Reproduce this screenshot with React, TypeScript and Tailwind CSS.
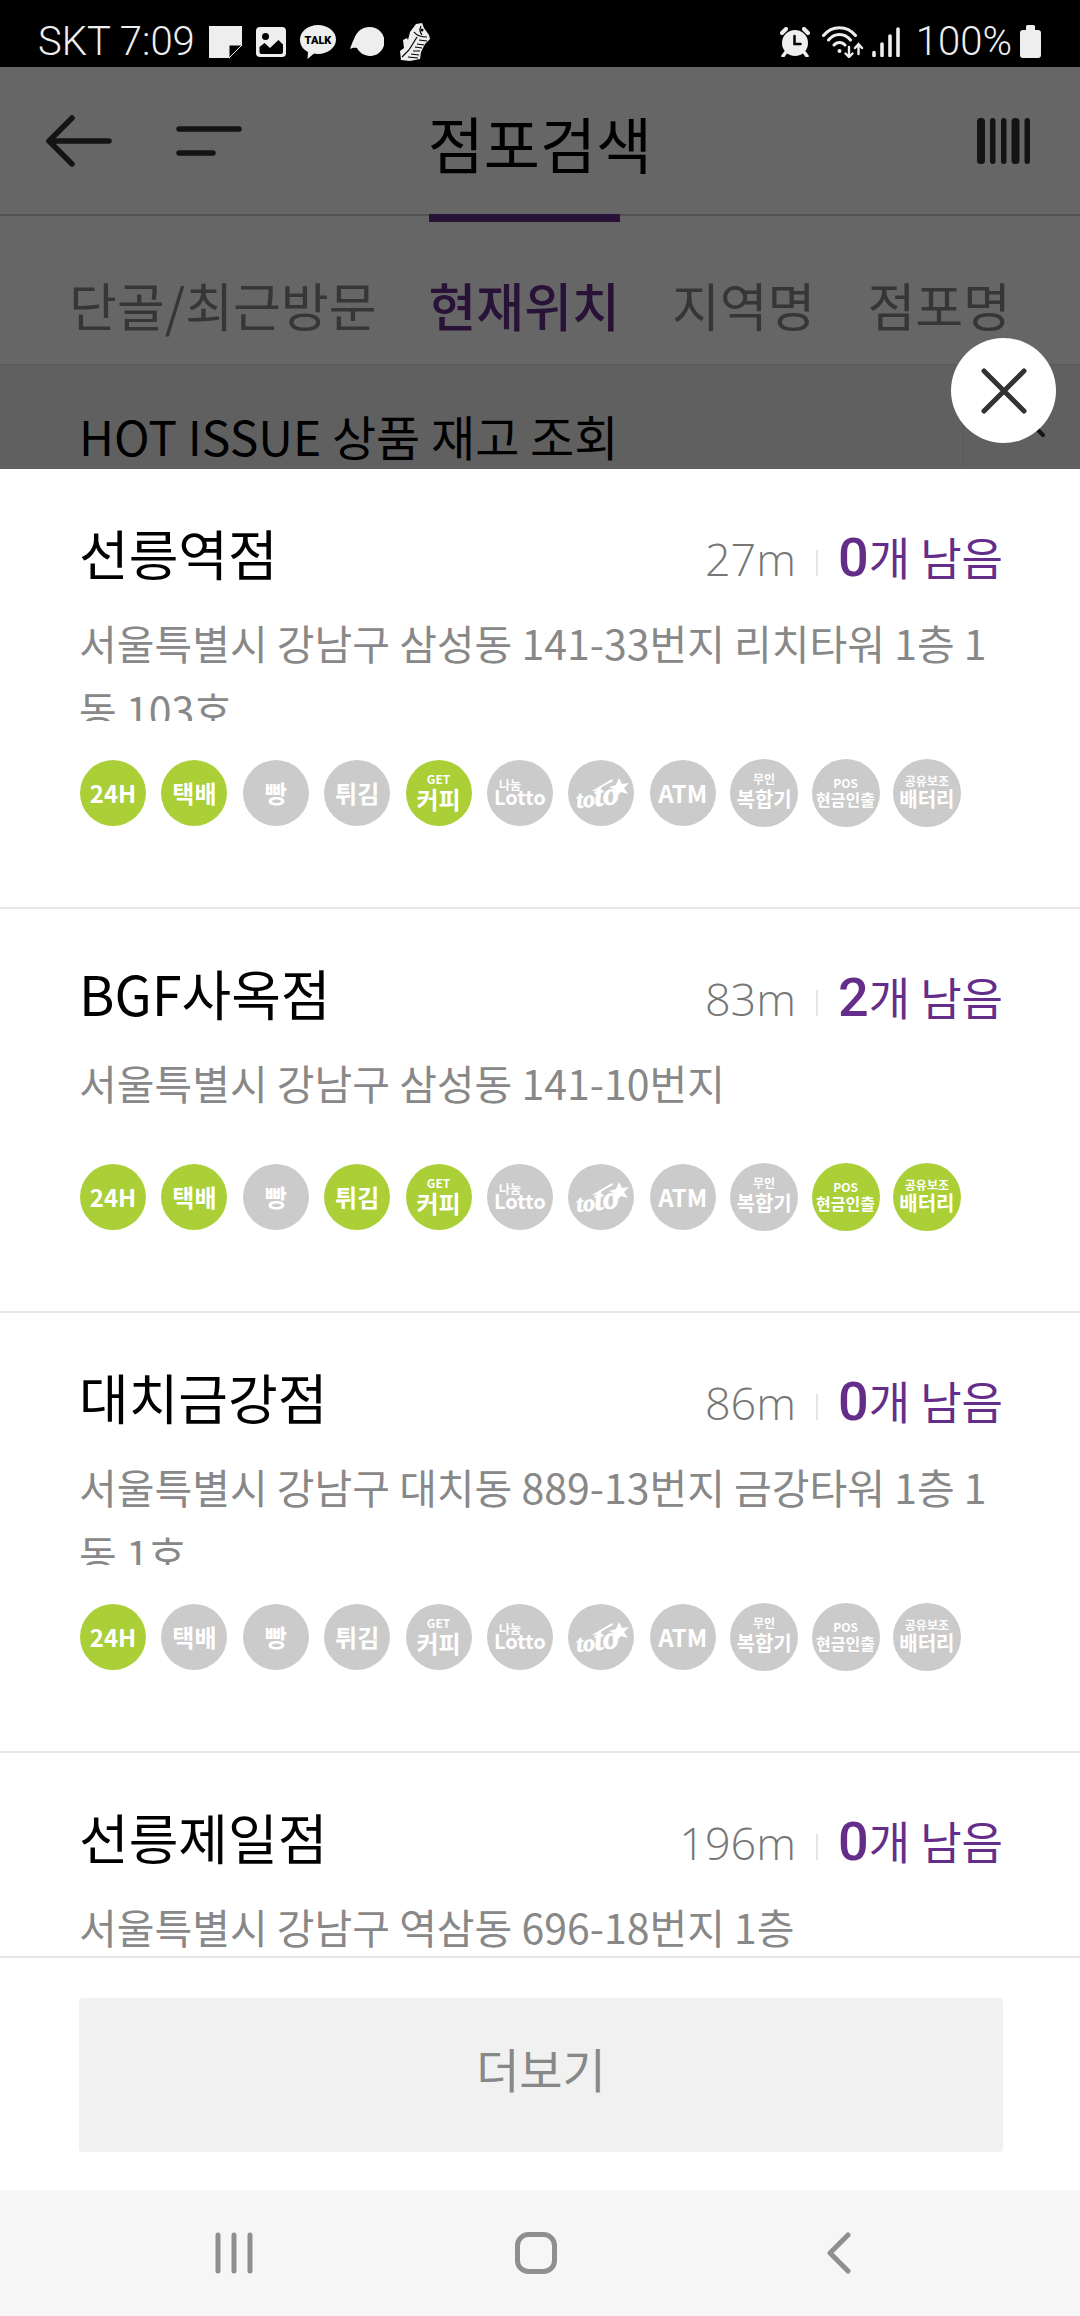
import type { ReactNode } from "react";
import clsx from "clsx";

type Service =
  | "24h"
  | "parcel"
  | "bread"
  | "fried"
  | "coffee"
  | "lotto"
  | "toto"
  | "atm"
  | "printer"
  | "pos"
  | "battery";

interface Store {
  name: string;
  distance: string;
  left: number;
  address: string;
  services: Service[];
}

const tabs = ["단골/최근방문", "현재위치", "지역명", "점포명"];

const stores: Store[] = [
  {
    name: "선릉역점",
    distance: "27m",
    left: 0,
    address: "서울특별시 강남구 삼성동 141-33번지 리치타워 1층 1동 103호",
    services: ["24h", "parcel", "coffee"],
  },
  {
    name: "BGF사옥점",
    distance: "83m",
    left: 2,
    address: "서울특별시 강남구 삼성동 141-10번지",
    services: ["24h", "parcel", "fried", "coffee", "pos", "battery"],
  },
  {
    name: "대치금강점",
    distance: "86m",
    left: 0,
    address: "서울특별시 강남구 대치동 889-13번지 금강타워 1층 1동 1호",
    services: ["24h"],
  },
  {
    name: "선릉제일점",
    distance: "196m",
    left: 0,
    address: "서울특별시 강남구 역삼동 696-18번지 1층",
    services: ["24h"],
  },
];

function TotoLogo() {
  return (
    <svg viewBox="0 0 66 66" className="size-full" fill="#fff">
      <g transform="rotate(-6 10 47)" fontFamily="Liberation Serif" fontWeight="700" fontStyle="italic" stroke="#fff" strokeWidth="0.600">
        <text x="9" y="48" fontSize="24">to</text>
        <text x="27" y="48" fontSize="32">to</text>
      </g>
      <path d="M24 31 44 19l1 2-18 10z" />
      <path d="m51 18 3 6 7-1-5 5 4 6-7-2-5 5v-7l-7-3 7-2z" />
    </svg>
  );
}

const badges: { id: Service; wide?: boolean; label: ReactNode }[] = [
  { id: "24h", label: <span className="text-[24px] leading-6">24H</span> },
  { id: "parcel", label: <span className="text-[24px] leading-6">택배</span> },
  { id: "bread", label: <span className="text-[24px] leading-6">빵</span> },
  { id: "fried", label: <span className="text-[24px] leading-6">튀김</span> },
  {
    id: "coffee",
    label: (
      <>
        <span className="text-[12px] leading-4">GET</span>
        <span className="mb-1 text-[24px] leading-6">커피</span>
      </>
    ),
  },
  {
    id: "lotto",
    label: (
      <>
        <span className="mr-5 text-[12px] leading-2">나눔</span>
        <span className="text-[20px] leading-4">Lotto</span>
      </>
    ),
  },
  { id: "toto", label: <TotoLogo /> },
  { id: "atm", label: <span className="text-[24px] leading-6">ATM</span> },
  {
    id: "printer",
    wide: true,
    label: (
      <>
        <span className="text-[12px] leading-4">무인</span>
        <span className="mb-1 text-[20px] leading-6">복합기</span>
      </>
    ),
  },
  {
    id: "pos",
    wide: true,
    label: (
      <>
        <span className="text-[12px] leading-4">POS</span>
        <span className="mb-1 text-[16px] leading-4">현금인출</span>
      </>
    ),
  },
  {
    id: "battery",
    wide: true,
    label: (
      <>
        <span className="text-[12px] leading-4">공유보조</span>
        <span className="mb-1 text-[20px] leading-5">배터리</span>
      </>
    ),
  },
];

function StatusBar() {
  return (
    <div className="flex h-[67px] shrink-0 items-center justify-between bg-black pt-4 pr-[39px] pl-[38px] font-['Roboto',sans-serif] text-[40px] leading-none font-light text-[#eee]">
      <div className="flex items-center gap-[14px]">
        <span>SKT 7:09</span>
        <svg viewBox="0 0 33 32" className="h-8 w-[33px]" fill="currentColor">
          <path d="M0 0h33v19H20v13H0z" />
          <path d="M20 32V19h13z" fill="#000" stroke="currentColor" strokeWidth="1" />
        </svg>
        <svg viewBox="0 0 30 30" className="size-[30px]">
          <rect width="30" height="30" rx="4" fill="currentColor" />
          <circle cx="9.500" cy="9.500" r="3.500" />
          <path d="m3.500 20 5-4 5.500 5 8.500-8 4.500 4.500V25a2 2 0 0 1-2 2H5.500a2 2 0 0 1-2-2z" />
        </svg>
        <svg viewBox="0 0 36 34" className="h-[34px] w-9">
          <path
            d="M18 0c10 0 18 6.500 18 14.500S28 29 18 29c-1.500 0-3 0-4-.4L7.500 34l.5-7C3 24.500 0 20 0 14.500 0 6.500 8 0 18 0z"
            fill="currentColor"
          />
          <text x="18" y="19" fontSize="11" fontWeight="900" textAnchor="middle" fontFamily="Roboto">
            TALK
          </text>
        </svg>
        <svg viewBox="0 0 34 29" className="h-[29px] w-[34px]" fill="currentColor">
          <path d="M20 0a14.500 14.500 0 1 1-13 21c-2-.5-4.500-.5-7 1 1-3 2-6 4-10C7 4 12 0 20 0z" />
        </svg>
        <svg viewBox="0 0 30 38" className="ml-0.5 h-[38px] w-[30px]">
          <path
            d="M16 1 22 0l2 5 5 7 1 4-5 5-4 8-1 7-10 2-9-1-1-9 4-3-1-8 4-2 1 2 2-8z"
            fill="currentColor"
          />
          <path
            d="M21 3c-2 4-1 6 1 9M14 9c3 4 7 5 13 5M17 14 9 27 2 34M19 17l8 1M17 21l7 1M15 24l7 1M13 28l7 0M11 31l8 1M8 34l10 1"
            stroke="#000"
            strokeWidth="1.200"
            fill="none"
          />
          <circle cx="22" cy="7" r="1.500" />
        </svg>
      </div>

      <div className="flex items-center gap-2">
        <svg viewBox="0 0 30 30" className="mr-1 size-[30px]" fill="none" stroke="currentColor" strokeLinecap="round">
          <circle cx="15" cy="16" r="13" fill="currentColor" stroke="none" />
          <path d="M2 6l4-4M28 6l-4-4" strokeWidth="4" />
          <path d="M6 25l-3 4M24 25l3 4" strokeWidth="3.500" />
          <path d="M14.500 9v8h6" stroke="#000" strokeWidth="2.500" />
        </svg>
        <svg viewBox="0 0 42 32" className="h-8 w-[42px]" fill="none" stroke="currentColor" strokeWidth="3" strokeLinecap="round">
          <path d="M1.500 9.500C10-1 25-1 33.500 9.500M6.500 14c6-7.500 16-7.500 22 0M12 19c3-3.500 8-3.500 11 0" />
          <circle cx="17.500" cy="25" r="2" fill="currentColor" stroke="none" />
          <path d="M27 21v10m-3.500-3.500L27 31l3.500-3.500M36.500 28V18m-3.500 4 3.500-4 3.500 4" strokeWidth="2.400" />
        </svg>
        <svg viewBox="0 0 28 30" className="mr-2 h-[30px] w-7" stroke="currentColor" strokeWidth="3.600" strokeLinecap="round">
          <path d="M2 25.500v3M10 17v11.500M18 9v19.500M26 2v26.500" />
        </svg>
        <span>100%</span>
        <svg viewBox="0 0 21 33" className="h-[33px] w-[21px]" fill="currentColor">
          <path d="M6 5V1.500A1.500 1.500 0 0 1 7.500 0h6A1.500 1.500 0 0 1 15 1.500V5h3a3 3 0 0 1 3 3v22a3 3 0 0 1-3 3H3a3 3 0 0 1-3-3V8a3 3 0 0 1 3-3z" />
        </svg>
      </div>
    </div>
  );
}

function SearchPage() {
  return (
    <div className="relative h-[402px] shrink-0 overflow-hidden bg-white">
      <header className="grid h-[149px] grid-cols-[1fr_auto_1fr] items-center border-b-2 border-[#cdcdcd] pr-[50px] pl-[46px] text-[#333]">
        <div className="flex items-center gap-16">
          <button type="button" aria-label="뒤로">
            <svg viewBox="0 0 66 52" className="h-[52px] w-[66px]" fill="none" stroke="currentColor" strokeWidth="5.500" strokeLinecap="round" strokeLinejoin="round">
              <path d="M63 26H3M26 3 3 26l23 23" />
            </svg>
          </button>
          <button type="button" aria-label="메뉴">
            <svg viewBox="0 0 66 30" className="h-[30px] w-[66px]" stroke="currentColor" strokeWidth="5.500" strokeLinecap="round">
              <path d="M3 3h60M3 27h34" />
            </svg>
          </button>
        </div>
        <h1 className="pt-1 pl-1 text-[61px] leading-none text-black">점포검색</h1>
        <button type="button" aria-label="바코드" className="justify-self-end">
          <svg viewBox="0 0 53 46" className="h-[46px] w-[53px]" fill="currentColor">
            <rect width="8" height="46" rx="3.500" />
            <rect x="13" width="5.500" height="46" rx="2.700" />
            <rect x="24" width="5.500" height="46" rx="2.700" />
            <rect x="34.500" width="8" height="46" rx="3.500" />
            <rect x="47.500" width="5.500" height="46" rx="2.700" />
          </svg>
        </button>
      </header>

      <nav className="-mt-0.5 flex h-[152px] justify-center gap-[52px] border-b-2 border-[#e5e5e5] text-[52px] leading-none whitespace-nowrap">
        {tabs.map((tab) => (
          <button
            key={tab}
            type="button"
            className={clsx(
              "border-t-8 pt-6",
              tab === "현재위치"
                ? "border-[#652d8a] font-medium text-[#652d8a]"
                : "border-transparent text-[#888]",
            )}
          >
            {tab}
          </button>
        ))}
      </nav>

      <div className="flex h-[138px] items-center justify-between bg-[#f1f1f1] pl-[79px]">
        <h2 className="text-[48px] leading-none">HOT ISSUE 상품 재고 조회</h2>
        <button
          type="button"
          aria-label="접기"
          className="flex h-full w-[118px] items-start justify-center border-l-2 border-[#e9e9e9] pt-[46px]"
        >
          <svg viewBox="0 0 46 26" className="h-[26px] w-[46px]" fill="none" stroke="#333" strokeWidth="4" strokeLinecap="round">
            <path d="M2 23 23 2l21 21" />
          </svg>
        </button>
      </div>

      <div className="absolute inset-0 bg-black/60" />
    </div>
  );
}

function StoreItem({ store }: { store: Store }) {
  return (
    <li className="border-b-2 border-[#e7e7e7] pt-12 pr-[77px] pb-20 pl-[79px]">
      <div className="flex h-[72px] items-baseline justify-between">
        <h3 className="text-[54px] leading-[72px] text-black">{store.name}</h3>
        <div className="flex items-baseline gap-5 leading-none">
          <span className="font-['Open_Sans',sans-serif] text-[45px] font-light text-[#777]">
            {store.distance}
          </span>
          <span className="h-[26px] w-0.5 bg-[#e5e5e5]" />
          <p className="text-[45px] text-[#652d8a]">
            <strong className="font-['Roboto',sans-serif] text-[54px] font-medium">{store.left}</strong>
            개 남음
          </p>
        </div>
      </div>
      <p className="mt-5 max-h-[112px] min-h-[76px] overflow-hidden text-[41px] leading-[67px] break-all text-[#888]">
        {store.address}
      </p>
      <ul className="mt-[38px] flex h-[68px] max-w-[882px] items-center justify-between font-bold text-white">
        {badges.map((badge) => (
          <li key={badge.id} className="flex size-[68px] items-center justify-center whitespace-nowrap">
            <div
              className={clsx(
                "flex shrink-0 flex-col items-center justify-center rounded-full",
                badge.wide ? "size-[68px]" : "size-[66px]",
                store.services.includes(badge.id) ? "bg-[#aacf37]" : "bg-[#cbcbcb]",
              )}
            >
              {badge.label}
            </div>
          </li>
        ))}
      </ul>
    </li>
  );
}

function NavigationBar() {
  return (
    <div className="flex h-[126px] shrink-0 items-center justify-between bg-[#f6f6f6] pr-[229px] pl-[215px] text-[#8f8f8f]">
      <button type="button" aria-label="최근 앱">
        <svg viewBox="0 0 38 42" className="h-[42px] w-[38px]" stroke="currentColor" strokeWidth="5" strokeLinecap="round">
          <path d="M3 3v36M19 3v36M35 3v36" />
        </svg>
      </button>
      <button type="button" aria-label="홈" className="mr-2">
        <svg viewBox="0 0 42 42" className="size-[42px]" fill="none" stroke="currentColor" strokeWidth="5">
          <rect x="2.500" y="2.500" width="37" height="37" rx="11" />
        </svg>
      </button>
      <button type="button" aria-label="이전">
        <svg viewBox="0 0 24 42" className="h-[42px] w-6" fill="none" stroke="currentColor" strokeWidth="5" strokeLinecap="round" strokeLinejoin="round">
          <path d="M21 3 3 21l18 18" />
        </svg>
      </button>
    </div>
  );
}

export default function App() {
  return (
    <div className="flex h-screen flex-col overflow-hidden bg-white font-['Noto_Sans_CJK_KR',sans-serif] text-black">
      <StatusBar />
      <SearchPage />

      <section className="relative flex min-h-0 flex-1 flex-col bg-white">
        <button
          type="button"
          aria-label="닫기"
          className="absolute -top-[131px] right-6 flex size-[105px] items-center justify-center rounded-full bg-white"
        >
          <svg viewBox="0 0 46 46" className="size-[46px]" stroke="#333" strokeWidth="5" strokeLinecap="round">
            <path d="m3 3 40 40M43 3 3 43" />
          </svg>
        </button>
        <ul className="min-h-0 flex-1 overflow-hidden">
          {stores.map((store) => (
            <StoreItem key={store.name} store={store} />
          ))}
        </ul>
        <div className="shrink-0 border-t-2 border-[#e7e7e7] pt-10 pr-[77px] pb-[38px] pl-[79px]">
          <button
            type="button"
            className="h-[154px] w-full rounded bg-[#f1f1f1] pb-4 text-[47px] leading-none text-[#888]"
          >
            더보기
          </button>
        </div>
      </section>

      <NavigationBar />
    </div>
  );
}
